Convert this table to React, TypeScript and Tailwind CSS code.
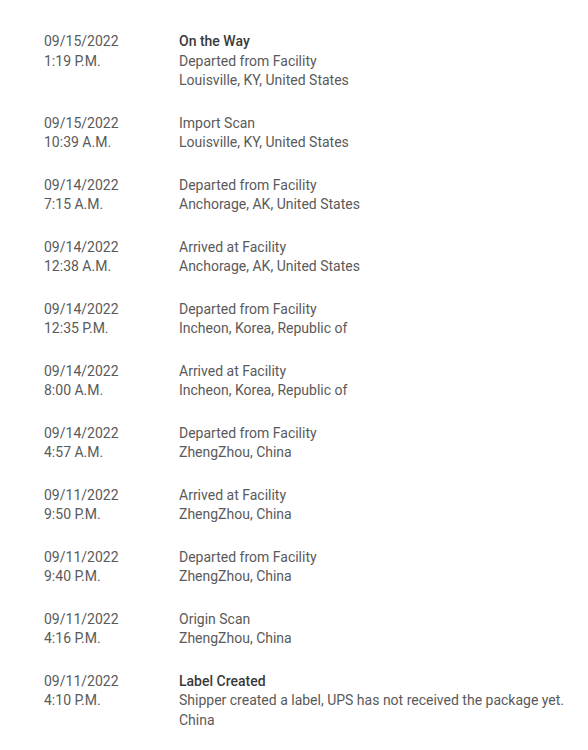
const events = [
  { date: "09/15/2022", time: "1:19 P.M.", title: "On the Way", lines: ["Departed from Facility", "Louisville, KY, United States"] },
  { date: "09/15/2022", time: "10:39 A.M.", lines: ["Import Scan", "Louisville, KY, United States"] },
  { date: "09/14/2022", time: "7:15 A.M.", lines: ["Departed from Facility", "Anchorage, AK, United States"] },
  { date: "09/14/2022", time: "12:38 A.M.", lines: ["Arrived at Facility", "Anchorage, AK, United States"] },
  { date: "09/14/2022", time: "12:35 P.M.", lines: ["Departed from Facility", "Incheon, Korea, Republic of"] },
  { date: "09/14/2022", time: "8:00 A.M.", lines: ["Arrived at Facility", "Incheon, Korea, Republic of"] },
  { date: "09/14/2022", time: "4:57 A.M.", lines: ["Departed from Facility", "ZhengZhou, China"] },
  { date: "09/11/2022", time: "9:50 P.M.", lines: ["Arrived at Facility", "ZhengZhou, China"] },
  { date: "09/11/2022", time: "9:40 P.M.", lines: ["Departed from Facility", "ZhengZhou, China"] },
  { date: "09/11/2022", time: "4:16 P.M.", lines: ["Origin Scan", "ZhengZhou, China"] },
  { date: "09/11/2022", time: "4:10 P.M.", title: "Label Created", lines: ["Shipper created a label, UPS has not received the package yet.", "China"] },
];

export default function App() {
  return (
    <div className="min-h-screen bg-white pl-[44px] pt-[32px] font-['Roboto',sans-serif] text-[14px] leading-[19.5px] text-[#5a5a5a]">
      <div className="flex flex-col gap-[23px]">
        {events.map((ev, i) => (
          <div key={i} className="flex">
            <div className="w-[135px] shrink-0">
              <div>{ev.date}</div>
              <div>{ev.time}</div>
            </div>
            <div>
              {ev.title && <div className="font-medium text-[#3a3a3a]">{ev.title}</div>}
              {ev.lines.map((l, j) => (
                <div key={j}>{l}</div>
              ))}
            </div>
          </div>
        ))}
      </div>
    </div>
  );
}
